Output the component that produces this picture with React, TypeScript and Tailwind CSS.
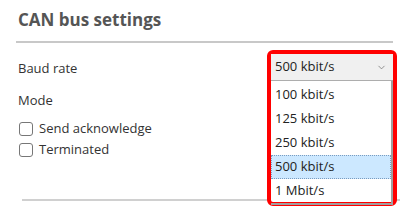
import { ChevronDown } from 'lucide-react';

const rates = ['100 kbit/s', '125 kbit/s', '250 kbit/s', '500 kbit/s', '1 Mbit/s'];

export default function App() {
  const selected = '500 kbit/s';

  return (
    <div className="relative w-[400px] h-[207px] bg-white overflow-hidden text-[#333] font-['Open_Sans',sans-serif]">
      <div className="pl-[18px] pr-[7px] pt-[8px]">
        <h1 className="text-[17px] font-bold text-[#555] leading-[24px]">CAN bus settings</h1>
        <div className="mt-[9px] -ml-[2px] h-[2px] bg-[#c8c8c8]" />
        <div className="mt-[14px] flex flex-col">
          <div className="h-[24px] flex items-center text-[13px]">Baud rate</div>
          <div className="mt-[10px] h-[20px] flex items-center text-[13px]">Mode</div>
          <label className="mt-[7px] h-[21px] flex items-center gap-[6px] text-[13px]">
            <span className="w-[14px] h-[14px] ml-[1px] border border-[#777] rounded-[3px] bg-white" />
            Send acknowledge
          </label>
          <label className="h-[21px] flex items-center gap-[6px] text-[13px]">
            <span className="w-[14px] h-[14px] ml-[1px] border border-[#777] rounded-[3px] bg-white" />
            Terminated
          </label>
        </div>
      </div>
      <div className="absolute left-[22px] right-0 top-[199px] h-[2px] bg-[#d0d0d0]" />

      <div className="absolute left-[267px] top-[50px] w-[130px] h-[156px] border-[4px] border-[#ff0000] rounded-[6px] bg-white flex flex-col">
        <div className="h-[27px] shrink-0 flex items-center justify-between pl-[4px] pr-[6px] bg-[#f0f0f0] border-b border-[#adadad] text-[13px] text-[#222]">
          <span>{selected}</span>
          <ChevronDown size={11} strokeWidth={1.5} className="text-[#666]" />
        </div>
        <div className="flex-1 flex flex-col border-r-[2px] border-b-[2px] border-[#a0a0a0] pt-[2px]">
          {rates.map((r) => (
            <div
              key={r}
              className={
                r === selected
                  ? 'h-[24px] shrink-0 flex items-center pl-[3px] text-[13px] text-[#222] bg-[#cce8ff] border border-dotted border-[#7a9cc0]'
                  : 'h-[24px] shrink-0 flex items-center pl-[4px] text-[13px] text-[#222]'
              }
            >
              {r}
            </div>
          ))}
        </div>
      </div>
    </div>
  );
}
